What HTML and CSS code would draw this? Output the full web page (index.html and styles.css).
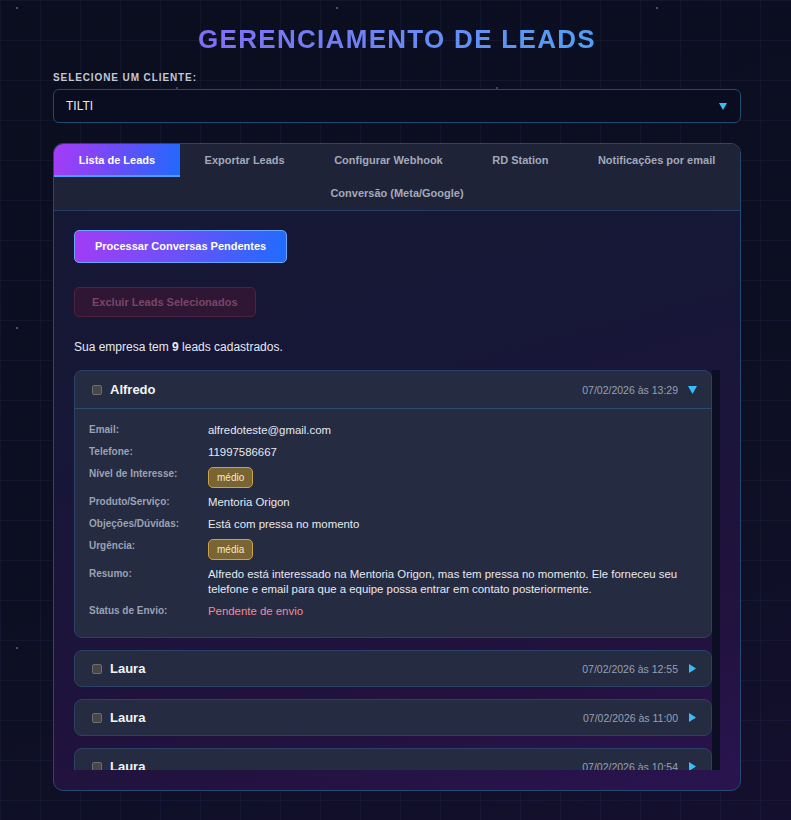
FILE: index.html
```html
<!DOCTYPE html>
<html lang="pt-BR">
<head>
<meta charset="utf-8">
<title>Gerenciamento de Leads</title>
<link rel="stylesheet" href="styles.css">
</head>
<body>
<div class="page">
  <h1 class="title">GERENCIAMENTO DE LEADS</h1>
  <label class="field-label">SELECIONE UM CLIENTE:</label>
  <div class="select">
    <span>TILTI</span>
    <svg class="select-arrow" width="8" height="8" viewBox="0 0 8 8"><polygon points="0,1 8,1 4,8" fill="#38bdf8"/></svg>
  </div>

  <div class="panel">
    <div class="tabs">
      <div class="tab active">Lista de Leads</div>
      <div class="tab">Exportar Leads</div>
      <div class="tab">Configurar Webhook</div>
      <div class="tab">RD Station</div>
      <div class="tab">Notificações por email</div>
      <div class="tab">Conversão (Meta/Google)</div>
    </div>
    <div class="content">
      <button class="btn btn-primary">Processar Conversas Pendentes</button>
      <button class="btn btn-danger" disabled>Excluir Leads Selecionados</button>
      <p class="count">Sua empresa tem <b>9</b> leads cadastrados.</p>

      <div class="list">
        <div class="lead open">
          <div class="lead-head">
            <span class="check"></span>
            <span class="name">Alfredo</span>
            <span class="date">07/02/2026 às 13:29</span>
            <svg class="arrow" width="9" height="9" viewBox="0 0 9 9"><polygon points="0,1 9,1 4.5,9" fill="#38bdf8"/></svg>
          </div>
          <div class="lead-body">
            <div class="k">Email:</div><div class="v">alfredoteste@gmail.com</div>
            <div class="k">Telefone:</div><div class="v">11997586667</div>
            <div class="k">Nível de Interesse:</div><div class="v"><span class="badge">médio</span></div>
            <div class="k">Produto/Serviço:</div><div class="v">Mentoria Origon</div>
            <div class="k">Objeções/Dúvidas:</div><div class="v">Está com pressa no momento</div>
            <div class="k">Urgência:</div><div class="v"><span class="badge">média</span></div>
            <div class="k">Resumo:</div><div class="v">Alfredo está interessado na Mentoria Origon, mas tem pressa no momento. Ele forneceu seu telefone e email para que a equipe possa entrar em contato posteriormente.</div>
            <div class="k">Status de Envio:</div><div class="v pending">Pendente de envio</div>
          </div>
        </div>

        <div class="lead">
          <div class="lead-head">
            <span class="check"></span>
            <span class="name">Laura</span>
            <span class="date">07/02/2026 às 12:55</span>
            <svg class="arrow" width="9" height="9" viewBox="0 0 9 9"><polygon points="1,0 8,4.5 1,9" fill="#38bdf8"/></svg>
          </div>
        </div>
        <div class="lead">
          <div class="lead-head">
            <span class="check"></span>
            <span class="name">Laura</span>
            <span class="date">07/02/2026 às 11:00</span>
            <svg class="arrow" width="9" height="9" viewBox="0 0 9 9"><polygon points="1,0 8,4.5 1,9" fill="#38bdf8"/></svg>
          </div>
        </div>
        <div class="lead">
          <div class="lead-head">
            <span class="check"></span>
            <span class="name">Laura</span>
            <span class="date">07/02/2026 às 10:54</span>
            <svg class="arrow" width="9" height="9" viewBox="0 0 9 9"><polygon points="1,0 8,4.5 1,9" fill="#38bdf8"/></svg>
          </div>
        </div>
        <div class="lead">
          <div class="lead-head">
            <span class="check"></span>
            <span class="name">Laura</span>
            <span class="date">07/02/2026 às 10:12</span>
            <svg class="arrow" width="9" height="9" viewBox="0 0 9 9"><polygon points="1,0 8,4.5 1,9" fill="#38bdf8"/></svg>
          </div>
        </div>
        <div class="lead">
          <div class="lead-head">
            <span class="check"></span>
            <span class="name">Marcos</span>
            <span class="date">06/02/2026 às 18:40</span>
            <svg class="arrow" width="9" height="9" viewBox="0 0 9 9"><polygon points="1,0 8,4.5 1,9" fill="#38bdf8"/></svg>
          </div>
        </div>
      </div>
    </div>
  </div>
</div>
</body>
</html>
```

FILE: styles.css
```css
* { box-sizing: border-box; }

html, body { height: 100%; }

body {
  margin: 0;
  font-family: "Liberation Sans", Arial, sans-serif;
  color: #e2e6ef;
  background-color: #0b0e1f;
  background-image:
    radial-gradient(circle at 17px 8px, rgba(150,160,200,0.45) 0 1px, transparent 1.5px),
    radial-gradient(circle at 177px 88px, rgba(150,160,200,0.35) 0 1px, transparent 1.5px),
    radial-gradient(circle at 97px 248px, rgba(150,160,200,0.35) 0 1px, transparent 1.5px),
    linear-gradient(rgba(70,90,150,0.10) 1px, transparent 1px),
    linear-gradient(90deg, rgba(70,90,150,0.10) 1px, transparent 1px),
    linear-gradient(160deg, #0b0e1f 0%, #0c0f22 55%, #140f2e 100%);
  background-size: 320px 320px, 320px 320px, 320px 320px, 40px 40px, 40px 40px, 100% 100%;
}

.page {
  width: 688px;
  margin-left: 53px;
  padding-top: 24px;
}

.title {
  margin: 0 0 18px;
  font-size: 26px;
  line-height: 30px;
  font-weight: 700;
  letter-spacing: 1.3px;
  text-align: center;
  background: linear-gradient(90deg, #8f5cf4 0%, #6b86f5 50%, #3cb4f6 100%);
  -webkit-background-clip: text;
  background-clip: text;
  color: transparent;
}

.field-label {
  display: block;
  font-size: 10px;
  line-height: 12px;
  font-weight: 700;
  letter-spacing: 0.9px;
  color: #c3c8d4;
  margin-bottom: 5px;
}

.select {
  height: 34px;
  display: flex;
  align-items: center;
  justify-content: space-between;
  padding: 0 12px;
  border: 1px solid #1f4a72;
  border-radius: 6px;
  background: #0a0d1f;
  font-size: 12px;
  color: #e6e9f0;
  margin-bottom: 20px;
}

.select-arrow { margin-right: 1px; }

.panel {
  border: 1px solid #244a73;
  border-radius: 10px;
  overflow: hidden;
  background: linear-gradient(165deg, #151933 0%, #171637 40%, #22123f 80%, #2a1450 100%);
}

.tabs {
  display: flex;
  flex-wrap: wrap;
  justify-content: center;
  background: #1f2338;
  border-bottom: 1px solid #24406a;
}

.tab {
  flex-grow: 1;
  text-align: center;
  padding: 10px 23px 8px;
  border-bottom: 2px solid transparent;
  font-size: 11px;
  line-height: 13px;
  font-weight: 700;
  color: #a3a9b8;
  white-space: nowrap;
}

.tab.active {
  color: #ffffff;
  background: linear-gradient(100deg, #a63cf6 0%, #6a4cf8 50%, #1f6afc 100%);
  border-bottom-color: #4f9dfb;
}

.content {
  padding: 19px 20px 20px;
}

.btn {
  display: block;
  font-family: inherit;
  font-size: 11px;
  line-height: 13px;
  font-weight: 700;
  border-radius: 5px;
  padding: 9px 20px;
}

.btn-primary {
  color: #ffffff;
  background: linear-gradient(100deg, #a23cf6 0%, #6a52f8 50%, #1f6cfd 100%);
  border: 1px solid #6aa6ff;
  margin-bottom: 24px;
}

.btn-danger {
  padding: 8px 17px 7px;
  color: #77466a;
  background: #2f1634;
  border: 1px solid #4e2240;
  margin-bottom: 23px;
}

.count {
  margin: 0 0 15px;
  font-size: 12px;
  line-height: 15px;
  color: #e6e9f0;
}

.count b { font-weight: 700; }

.list {
  height: 400px;
  overflow-y: auto;
  scrollbar-width: none;
  padding-right: 8px;
  display: flex;
  flex-direction: column;
  gap: 12px;
  background: linear-gradient(90deg, transparent calc(100% - 8px), #0c0f23 calc(100% - 8px));
}

.list::-webkit-scrollbar { display: none; }

.lead {
  flex: none;
  background: #252b41;
  border: 1px solid #2b4266;
  border-radius: 8px;
}

.lead-head {
  height: 35px;
  display: flex;
  align-items: center;
  padding: 0 14px 0 17px;
}

.lead.open .lead-head {
  height: 38px;
  border-bottom: 1px solid #2c4b70;
}

.check {
  width: 10px;
  height: 10px;
  border: 1px solid #6d6d6d;
  background: #474747;
  border-radius: 2px;
  margin-right: 8px;
}

.name {
  font-size: 13px;
  font-weight: 700;
  color: #f2f4f8;
}

.date {
  margin-left: auto;
  font-size: 10.5px;
  color: #97a0b3;
  margin-right: 10px;
}

.lead-body {
  display: grid;
  grid-template-columns: 110px 1fr;
  column-gap: 9px;
  row-gap: 7px;
  padding: 14px 14px 18px 14px;
}

.k {
  font-size: 10px;
  line-height: 13px;
  font-weight: 700;
  color: #9aa2b4;
}

.v {
  font-size: 11.4px;
  line-height: 15px;
  color: #e6e9f0;
}

.badge {
  display: inline-block;
  vertical-align: top;
  padding: 3px 8px;
  font-size: 10px;
  line-height: 13px;
  color: #f3ead0;
  background: #7a6432;
  border: 1px solid #c8a34c;
  border-radius: 5px;
}

.pending { color: #f08c9b; }
```
